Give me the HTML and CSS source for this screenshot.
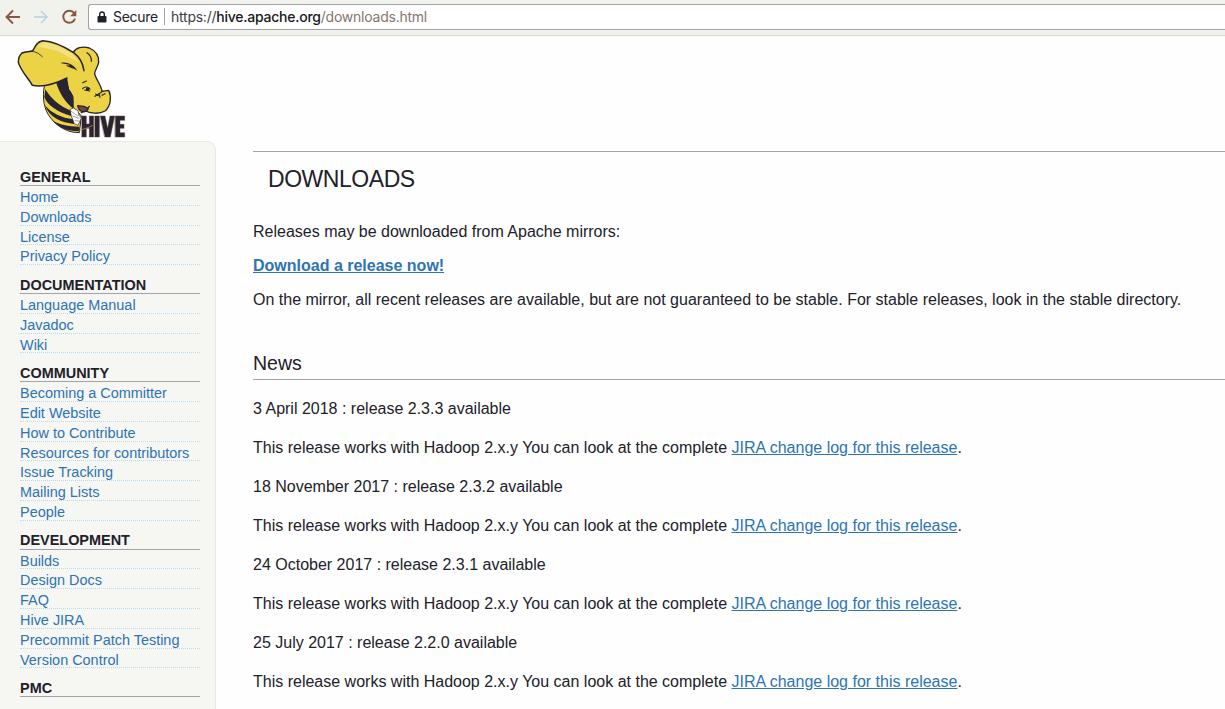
FILE: index.html
```html
<!DOCTYPE html>
<html lang="en">
<head>
<meta charset="utf-8">
<title>Downloads</title>
<link rel="stylesheet" href="styles.css">
</head>
<body>
<header class="toolbar">
  <svg class="nav-icons" width="88" height="35" viewBox="0 0 88 35" fill="none" stroke-width="1.9">
    <path stroke="#85583f" d="M20 17H7M13 10.5L6.5 17l6.500 6.500"/>
    <path stroke="#b5d0e2" stroke-width="1.3" d="M34 17h13M41 11l6 6-6 6"/>
    <path stroke="#85583f" d="M74.200 13.300A6 6 0 1 0 75 18.600"/>
    <path fill="#85583f" d="M76.300 10v6.200h-6.200z"/>
  </svg>
  <div class="address">
    <svg class="lock" width="10" height="12" viewBox="0 0 10 12"><rect x=".5" y="5" width="9" height="6.500" rx="1" fill="#1f222b"/><path d="M2.700 5.500V3.300a2.300 2.300 0 0 1 4.600 0v2.200" fill="none" stroke="#1f222b" stroke-width="1.400"/></svg>
    <span class="secure">Secure</span>
    <span class="url">https://<b>hive.apache.org</b><i>/downloads.html</i></span>
  </div>
</header>
<div class="logo">
  <svg width="125" height="106" viewBox="0 0 375 318" stroke-linejoin="round" stroke-linecap="round">
    <path d="M103 150C96 185 102 222 122 246C145 275 175 290 208 290L214 240L192 214L176 128L124 138Z" fill="#ecd245" stroke="#292431" stroke-width="3"/>
    <g fill="#292431">
      <path d="M138 138L172 126L178 160L192 182L190 218C166 200 148 172 138 138Z"/>
      <path d="M106 160C122 187 149 211 183 224L184 240C146 230 111 208 103 183Z"/>
      <path d="M104 208C126 232 154 246 190 250L194 264C153 260 119 245 104 208Z"/>
      <path d="M126 253C146 266 176 272 207 272L211 286C174 287 147 276 126 253Z"/>
    </g>
    <path d="M184 54C190 38 217 30 238 36C259 45 267 62 266 80C263 93 254 104 254 112C256 128 274 147 276 166L296 163C305 181 303 210 285 225C266 236 240 232 224 223L214 230C197 225 188 211 192 197L190 178L178 160L171 124L150 90Z" fill="#ecd245"/>
    <path d="M190 49C197 35 217 30 238 36C259 45 267 62 266 80C263 93 254 104 254 112C256 128 274 147 276 166L296 163C305 181 303 210 285 225C266 236 240 232 224 223L214 230" fill="none" stroke="#292431" stroke-width="4"/>
    <path d="M36 51C48 44 61 50 69 43C77 29 82 17 98 14C134 16 170 36 191 50C207 62 218 82 222 104L190 118L171 126C151 136 107 156 67 148C57 130 31 102 25 79C25 65 29 57 36 51Z" fill="#ecd245"/>
    <path d="M80 34L101 18C131 22 165 38 187 54L207 79L187 69L145 46L96 34Z" fill="#f5eaa0" opacity=".65"/>
    <path d="M171 126C151 136 107 156 67 148C57 130 31 102 25 79C25 65 29 57 36 51C48 44 61 50 69 43C77 29 82 17 98 14C134 16 170 36 191 50C207 62 218 78 222 104" fill="none" stroke="#292431" stroke-width="4.500"/>
    <path d="M66 46C79 47 88 54 97 62" fill="none" stroke="#292431" stroke-width="2.500"/>
    <path d="M151 81C169 76 190 84 202 104C190 96 178 94 167 89L181 87Z" fill="#292431"/>
    <path d="M231 50C240 56 245 64 244 76M218 140L229 135M218 158C224 150 236 152 240 160M224 162L239 165M255 181L267 173L279 165M267 173L270 184M257 174L265 179M285 173L276 178M206 217C217 224 231 222 238 211" fill="none" stroke="#292431" stroke-width="3.500"/>
    <path d="M228 155h9v9h-9z" fill="#292431"/>
    <path d="M203 209L222 211L235 218C225 234 207 228 203 209Z" fill="#744b37" stroke="#292431" stroke-width="4"/>
    <path d="M181 220L190 216L204 224L207 238L214 246L204 268L193 263L184 240Z" fill="#fff" stroke="#292431" stroke-width="2"/>
    <path d="M184 226L203 240M188 240L207 247M195 254L207 255" stroke="#777480" stroke-width="2"/>
    <g fill="#292431" stroke="#60402e" stroke-width="1.500">
      <path d="M216 240h13v24h9v-24h13v63h-13v-26h-9v26h-13zM255 240h13v63h-13zM271 240h14l8 37 7-37h14l-13 63h-16zM316 240h28v13h-14v12h12v12h-12v13h14v13h-28z"/>
    </g>
    <path d="M208 284L230 276L247 269" fill="none" stroke="#c6a34c" stroke-width="2"/>
  </svg>
</div>
<div class="page">
  <nav class="sidebar">
    <h2>General</h2>
    <ul><li><a>Home</a></li><li><a>Downloads</a></li><li><a>License</a></li><li><a>Privacy Policy</a></li></ul>
    <h2>Documentation</h2>
    <ul><li><a>Language Manual</a></li><li><a>Javadoc</a></li><li><a>Wiki</a></li></ul>
    <h2>Community</h2>
    <ul><li><a>Becoming a Committer</a></li><li><a>Edit Website</a></li><li><a>How to Contribute</a></li><li><a>Resources for contributors</a></li><li><a>Issue Tracking</a></li><li><a>Mailing Lists</a></li><li><a>People</a></li></ul>
    <h2>Development</h2>
    <ul><li><a>Builds</a></li><li><a>Design Docs</a></li><li><a>FAQ</a></li><li><a>Hive JIRA</a></li><li><a>Precommit Patch Testing</a></li><li><a>Version Control</a></li></ul>
    <h2>PMC</h2>
  </nav>
  <main class="content">
    <h1>DOWNLOADS</h1>
    <p class="intro">Releases may be downloaded from Apache mirrors:</p>
    <p class="intro"><a class="download">Download a release now!</a></p>
    <p class="intro">On the mirror, all recent releases are available, but are not guaranteed to be stable. For stable releases, look in the stable directory.</p>
    <h3>News</h3>
    <div class="news">
      <p>3 April 2018 : release 2.3.3 available</p>
      <p>This release works with Hadoop 2.x.y You can look at the complete <a>JIRA change log for this release</a>.</p>
      <p>18 November 2017 : release 2.3.2 available</p>
      <p>This release works with Hadoop 2.x.y You can look at the complete <a>JIRA change log for this release</a>.</p>
      <p>24 October 2017 : release 2.3.1 available</p>
      <p>This release works with Hadoop 2.x.y You can look at the complete <a>JIRA change log for this release</a>.</p>
      <p>25 July 2017 : release 2.2.0 available</p>
      <p>This release works with Hadoop 2.x.y You can look at the complete <a>JIRA change log for this release</a>.</p>
    </div>
  </main>
</div>
</body>
</html>
```
FILE: styles.css
```css
* { box-sizing: border-box; }
body { margin: 0; height: 709px; overflow: hidden; background: #fefefe; color: #222129; font-family: "Liberation Sans", Arial, sans-serif; font-size: 16px; display: flex; flex-direction: column; }
h1, h2, h3, p, ul { margin: 0; padding: 0; font-weight: normal; }
ul { list-style: none; }
.toolbar { height: 36px; flex: none; display: flex; align-items: flex-start; background: #f2f2ed; border-bottom: 1px solid #d1dad8; }
.nav-icons { flex: none; }
.address { flex: 1; height: 26px; margin-top: 4px; padding: 0 0 1px 8px; display: flex; align-items: center; background: #fff; border: 1px solid #a2a2ad; border-right: 0; border-radius: 3px 0 0 3px; font-family: Inter, sans-serif; font-size: 14px; white-space: nowrap; }
.lock { flex: none; margin-right: 6px; }
.secure { width: 52px; height: 17px; line-height: 17px; border-right: 1px solid #a2a2ad; letter-spacing: -.3px; }
.url { margin-left: 6px; letter-spacing: -.24px; color: #3d3d46; }
.url b { font-weight: 500; color: #17171d; }
.url i { font-style: normal; color: #85756f; }
.logo { height: 105px; flex: none; padding-left: 10px; }
.page { flex: 1; min-height: 0; display: flex; }
.sidebar { width: 216px; flex: none; padding: 15.200px 16px 0 20px; background: #f6f6f3; border: 1px solid #e9e9e2; border-width: 1px 1px 0 0; border-radius: 0 9px 0 0; font-size: 14.450px; }
.sidebar h2 { width: 180px; height: 28.800px; padding-top: 11.500px; line-height: 17px; border-bottom: 1px solid #a2a2ad; font-size: 14.450px; font-weight: bold; text-transform: uppercase; white-space: nowrap; }
.sidebar li { width: 180px; height: 19.800px; line-height: 22px; white-space: nowrap; border-bottom: 1px dotted #b5dcf0; }
.sidebar a, .content a { color: #2d74b2; }
.content { flex: 1; min-width: 0; margin: 10px 0 0 37px; border-top: 1px solid #a2a2ad; white-space: nowrap; }
h1 { height: 63px; padding: 13px 0 0 15px; font-size: 23px; line-height: 29px; letter-spacing: -.45px; }
.intro { height: 34px; line-height: 34px; }
.content a { text-decoration: underline; }
.content .download { font-weight: bold; }
h3 { height: 63px; padding-top: 34px; border-bottom: 1px solid #a2a2ad; font-size: 19.500px; line-height: 24px; }
.news { padding-top: 9px; }
.news p { height: 39px; line-height: 39px; }
```
